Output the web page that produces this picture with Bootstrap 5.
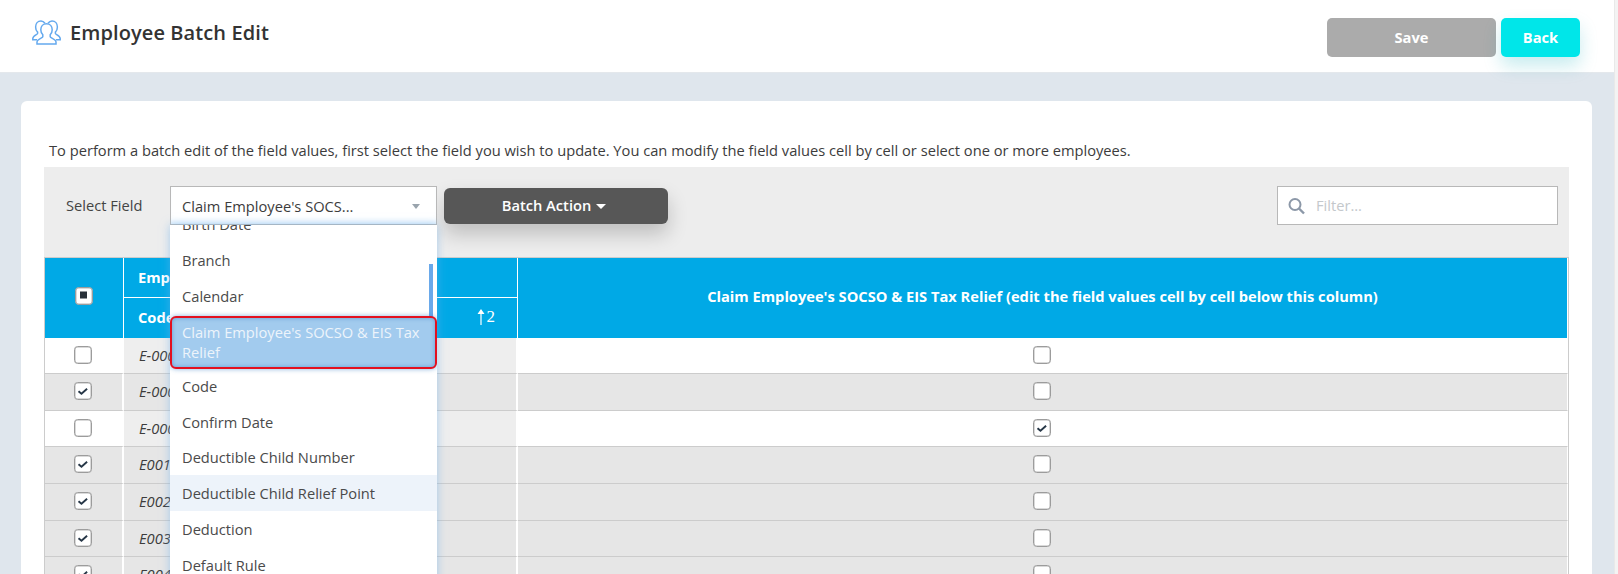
<!DOCTYPE html>
<html lang="en">
<head>
<meta charset="utf-8">
<title>Employee Batch Edit</title>
<link href="https://cdn.jsdelivr.net/npm/bootstrap@5.3.0/dist/css/bootstrap.min.css" rel="stylesheet">
<style>
html,body{height:574px;overflow:hidden}
body{font-family:"Open Sans","Noto Sans",sans-serif;font-size:11pt;line-height:20px;color:#3c3c3c;background:#f3f3f3}
.shell{width:1615px;height:574px;background:#dfe6ed;border-right:1px solid #e9e9e9}
.top-bar{height:73px;background:#fff;border-bottom:1px solid #e4e8ec;padding:18px 34px 0 32px}
.page-title{font-size:20px;font-weight:600;line-height:28px;color:#333;margin:1px 0 0;letter-spacing:.1px}
.title-wrap{gap:9px}
.act-group{gap:5px}
.act-btn{height:39px;border:0;border-radius:5px;color:#fff;font-weight:700;font-size:11pt;padding:0 0 2px;display:flex;align-items:center;justify-content:center}
.act-save{width:169px;background:#ababab}
.act-back{width:79px;background:#00e6e9;box-shadow:0 9px 18px rgba(0,170,180,.22)}
.act-btn:hover,.act-btn:disabled{color:#fff;opacity:1}
.act-save:hover,.act-save:disabled{background:#ababab}
.act-back:hover{background:#00e6e9}
.work-card{margin:28px 22px 0 21px;height:480px;border:0;border-radius:6px 6px 0 0;background:#fff;padding:39px 23px 0;overflow:visible}
.intro{margin:0 0 7px 5px;color:#3c3c3c;height:20px;white-space:nowrap}
.tools{height:90px;background:#ededed;padding:19px 11px 0 22px}
.field-label{width:104px;line-height:38px;color:#444}
.pick-wrap{position:relative;width:267px;height:39px;margin-right:7px}
.pick-box{height:39px;background:#fff;border:1px solid #b8b8b8;padding:0 11px;line-height:38px;color:#3c3c3c;box-shadow:inset 0 -6px 6px -5px rgba(130,190,240,.35)}
.pick-caret{position:absolute;left:242px;top:18px;width:0;height:0;border-left:4.5px solid transparent;border-right:4.5px solid transparent;border-top:5px solid #9aa4ad}
.pick-list{display:block;top:39px;left:0;width:267px;height:360px;margin:0;padding:0;border:0;border-radius:0;overflow:hidden;box-shadow:0 0 9px rgba(110,175,235,.55);font-size:11pt;z-index:20}
.pick-inner{margin-top:-18.5px}
.pick-list .dropdown-item{padding:7.9px 12px;line-height:20px;color:#4a4a4a;white-space:normal}
.pick-list .dropdown-item.is-hover{background:#edf3fa}
.pick-list .dropdown-item.is-sel{position:relative;z-index:2;margin:2px 1px -1px 0;padding:4px 10px 5px 10px;background:#a2cbee;color:#edf4fb;border:2px solid #e3101f;border-radius:6px;box-shadow:0 0 5px rgba(60,130,200,.6),inset 0 0 4px rgba(50,120,190,.55)}
.pick-thumb{position:absolute;left:259px;top:39px;width:4px;height:56px;background:#6aa9ea;z-index:1}
.batch-btn{width:224px;height:36px;margin-top:2px;padding:0 4px 2px 0;background:#575757;border:0;border-radius:6px;color:#fff;font-weight:600;font-size:11pt;box-shadow:0 10px 20px rgba(0,0,0,.2)}
.batch-btn:hover{background:#575757;color:#fff}
.batch-btn::after{margin-left:5px;vertical-align:.14em;border-top:.38em solid;border-right:.38em solid transparent;border-left:.38em solid transparent;border-bottom:0}
.filter-box{width:281px;height:39px;background:#fff;border:1px solid #b8b8b8;padding-left:10px;gap:11px}
.filter-box .form-control{border:0;border-radius:0;padding:0 0 2px;height:36px;font-size:11pt;box-shadow:none;background:transparent}
.filter-box .form-control::placeholder{color:#c4c8cc}
.grid-wrap{border-top:1px solid #ccc;border-left:1px solid #ccc;border-right:1px solid #ccc;width:1525px;height:320px;overflow:hidden;background:#fff}
.emp-grid{border-collapse:separate;border-spacing:0;width:1523px;table-layout:fixed;margin:0;font-size:11pt}
.c-tick{width:79px}
.c-code{width:394px}
.emp-grid>thead>tr>th{background:#00a9e6;color:#fff;font-weight:700;padding:0 14px;height:40px;border:0;border-right:1px solid #fff;vertical-align:middle;line-height:20px;box-shadow:none}
.emp-grid>thead>tr>th.top-sub{height:40px;border-bottom:1px solid #fff;padding-bottom:2px}
.emp-grid>thead>tr>th.low-sub{height:40px;padding-right:22px;padding-bottom:2px;line-height:18px}
.emp-grid>thead>tr>th.col-val{text-align:center;padding-bottom:5px}
.emp-grid>tbody>tr>td{height:36px;padding:0;border:0;border-right:2px solid #fff;border-bottom:1px solid #ccc;background:#e6e6e6;vertical-align:middle;line-height:20px;box-shadow:none;color:#3c3c3c}
.emp-grid>tbody>tr.tall>td{height:37px}
.emp-grid>tbody>tr.plain>td{background:#fff}
.emp-grid>tbody>tr.plain>td.code-cell{background:#eee}
.emp-grid>tbody>tr>td.code-cell{padding-left:15px;padding-bottom:2px;font-style:italic}
.emp-grid>tbody>tr>td.last-cell{border-right:1px solid #fff}
.tick-wrap{display:flex;justify-content:center;padding:0 2px 2px 0}
.head-tick{padding:0 1px 5px 0}
.tick{width:18px;height:18px;margin:0;float:none;border:1px solid #9c9c9c;border-radius:3px;background-color:#fff;box-shadow:inset 0 0 0 .5px #b5b5b5;flex:none}
.tick:checked{background-color:#fff;border-color:#9c9c9c;background-size:18px 18px;background-image:url("data:image/svg+xml,%3Csvg xmlns='http://www.w3.org/2000/svg' viewBox='0 0 18 18'%3E%3Cpath d='M4.5 9.2l3 2.6 5.6-5' fill='none' stroke='%23283848' stroke-width='1.9'/%3E%3C/svg%3E")}
.tick.mixed:checked{background-image:url("data:image/svg+xml,%3Csvg xmlns='http://www.w3.org/2000/svg' viewBox='0 0 18 18'%3E%3Crect x='5' y='4.5' width='7' height='7' fill='%23283038'/%3E%3C/svg%3E")}
.sort-mark{font-family:"Liberation Serif",serif;font-weight:400;font-size:17px;gap:2px}
</style>
</head>
<body>
<div class="shell">
  <header class="top-bar d-flex justify-content-between align-items-start">
    <div class="d-flex align-items-center title-wrap">
      <svg width="29" height="25" viewBox="0 0 29 25" fill="none" stroke="#64a9ee" stroke-width="1.5" aria-hidden="true">
        <path d="M13 3.200C11.800 1.600 10.400 1 9 1 5.700 1 3.600 3.800 3.600 7c0 2.200.8 4 2 5.100v1.500c0 .8-4.800 2-4.800 5v1.200H5"/>
        <path d="M16 3.200C17.200 1.600 18.600 1 20 1c3.300 0 5.400 2.800 5.400 6 0 2.200-.8 4-2 5.100v1.500c0 .8 4.800 2 4.800 5v1.200H24"/>
        <path d="M14.500 3.800c3.500 0 5.700 2.800 5.700 6 0 2-.8 3.800-2 4.900v2.100c0 1 5.800 2.200 5.800 5.200v2H5v-2c0-3 5.800-4.200 5.800-5.200v-2.100c-1.200-1.100-2-2.900-2-4.900 0-3.200 2.200-6 5.700-6z"/>
      </svg>
      <h1 class="page-title">Employee Batch Edit</h1>
    </div>
    <div class="d-flex act-group">
      <button type="button" class="btn act-btn act-save" disabled>Save</button>
      <button type="button" class="btn act-btn act-back">Back</button>
    </div>
  </header>
  <main class="card work-card">
    <p class="intro">To perform a batch edit of the field values, first select the field you wish to update. You can modify the field values cell by cell or select one or more employees.</p>
    <div class="tools d-flex align-items-start">
      <div class="field-label">Select Field</div>
      <div class="pick-wrap">
        <div class="pick-box">Claim Employee's SOCS...</div>
        <span class="pick-caret"></span>
        <div class="dropdown-menu pick-list">
          <div class="pick-inner">
            <a class="dropdown-item" href="#">Birth Date</a>
            <a class="dropdown-item" href="#">Branch</a>
            <a class="dropdown-item" href="#">Calendar</a>
            <a class="dropdown-item is-sel" href="#">Claim Employee's SOCSO &amp; EIS Tax Relief</a>
            <a class="dropdown-item" href="#">Code</a>
            <a class="dropdown-item" href="#">Confirm Date</a>
            <a class="dropdown-item" href="#">Deductible Child Number</a>
            <a class="dropdown-item is-hover" href="#">Deductible Child Relief Point</a>
            <a class="dropdown-item" href="#">Deduction</a>
            <a class="dropdown-item" href="#">Default Rule</a>
          </div>
          <span class="pick-thumb"></span>
        </div>
      </div>
      <button type="button" class="btn dropdown-toggle batch-btn">Batch Action</button>
      <div class="filter-box d-flex align-items-center ms-auto">
        <svg width="17" height="18" viewBox="0 0 17 18" fill="none" stroke="#8c98a8" aria-hidden="true" class="flex-shrink-0">
          <circle cx="7" cy="7.500" r="5.500" stroke-width="2"/>
          <path d="M11 11.500l5 5" stroke-width="2.400"/>
        </svg>
        <input type="text" class="form-control" placeholder="Filter...">
      </div>
    </div>
    <div class="grid-wrap">
      <table class="table emp-grid">
        <colgroup><col class="c-tick"><col class="c-code"><col></colgroup>
        <thead>
          <tr>
            <th rowspan="2"><div class="tick-wrap head-tick"><input class="form-check-input tick mixed" type="checkbox" checked aria-label="Select all"></div></th>
            <th class="top-sub">Employee</th>
            <th rowspan="2" class="col-val">Claim Employee's SOCSO &amp; EIS Tax Relief (edit the field values cell by cell below this column)</th>
          </tr>
          <tr>
            <th class="low-sub">
              <div class="d-flex justify-content-between align-items-center">
                <span>Code</span>
                <span class="sort-mark d-flex align-items-center">
                  <svg width="8" height="16" viewBox="0 0 8 16" fill="#fff" aria-hidden="true"><path d="M4 0l3.500 5H4.600v11H3.400V5H.5z"/></svg>2
                </span>
              </div>
            </th>
          </tr>
        </thead>
        <tbody>
          <tr class="plain"><td><div class="tick-wrap"><input class="form-check-input tick" type="checkbox" aria-label="Select E-0001"></div></td><td class="code-cell">E-0001</td><td class="last-cell"><div class="tick-wrap"><input class="form-check-input tick" type="checkbox" aria-label="Claim"></div></td></tr>
          <tr class="tall"><td><div class="tick-wrap"><input class="form-check-input tick" type="checkbox" checked aria-label="Select E-0002"></div></td><td class="code-cell">E-0002</td><td class="last-cell"><div class="tick-wrap"><input class="form-check-input tick" type="checkbox" aria-label="Claim"></div></td></tr>
          <tr class="plain"><td><div class="tick-wrap"><input class="form-check-input tick" type="checkbox" aria-label="Select E-0003"></div></td><td class="code-cell">E-0003</td><td class="last-cell"><div class="tick-wrap"><input class="form-check-input tick" type="checkbox" checked aria-label="Claim"></div></td></tr>
          <tr class="tall"><td><div class="tick-wrap"><input class="form-check-input tick" type="checkbox" checked aria-label="Select E001"></div></td><td class="code-cell">E001</td><td class="last-cell"><div class="tick-wrap"><input class="form-check-input tick" type="checkbox" aria-label="Claim"></div></td></tr>
          <tr class="tall"><td><div class="tick-wrap"><input class="form-check-input tick" type="checkbox" checked aria-label="Select E002"></div></td><td class="code-cell">E002</td><td class="last-cell"><div class="tick-wrap"><input class="form-check-input tick" type="checkbox" aria-label="Claim"></div></td></tr>
          <tr><td><div class="tick-wrap"><input class="form-check-input tick" type="checkbox" checked aria-label="Select E003"></div></td><td class="code-cell">E003</td><td class="last-cell"><div class="tick-wrap"><input class="form-check-input tick" type="checkbox" aria-label="Claim"></div></td></tr>
          <tr><td><div class="tick-wrap"><input class="form-check-input tick" type="checkbox" checked aria-label="Select E004"></div></td><td class="code-cell">E004</td><td class="last-cell"><div class="tick-wrap"><input class="form-check-input tick" type="checkbox" aria-label="Claim"></div></td></tr>
        </tbody>
      </table>
    </div>
  </main>
</div>
<script src="https://cdn.jsdelivr.net/npm/bootstrap@5.3.0/dist/js/bootstrap.bundle.min.js"></script>
</body>
</html>
